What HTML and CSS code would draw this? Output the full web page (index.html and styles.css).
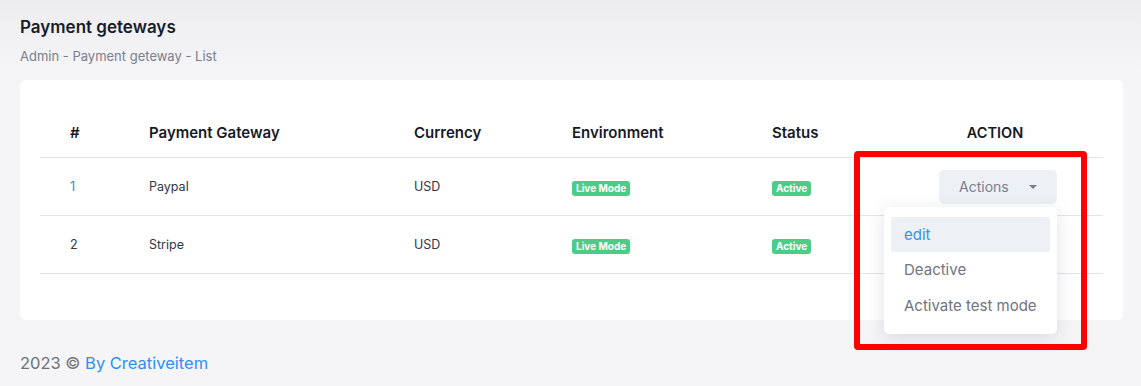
FILE: index.html
```html
<!DOCTYPE html>
<html lang="en">
<head>
    <meta charset="UTF-8">
    <meta name="viewport" content="width=device-width, initial-scale=1.0">
    <title>Payment geteways</title>
    <link rel="stylesheet" href="styles.css">
</head>
<body>
    <div class="page">
        <div class="page-head">
            <h1>Payment geteways</h1>
            <p class="crumbs">Admin - Payment geteway - List</p>
        </div>

        <div class="card">
            <table class="gateways">
                <colgroup>
                    <col class="c-num">
                    <col class="c-name">
                    <col class="c-cur">
                    <col class="c-env">
                    <col class="c-status">
                    <col class="c-action">
                </colgroup>
                <thead>
                    <tr>
                        <th>#</th>
                        <th>Payment Gateway</th>
                        <th>Currency</th>
                        <th>Environment</th>
                        <th>Status</th>
                        <th class="center">ACTION</th>
                    </tr>
                </thead>
                <tbody>
                    <tr>
                        <td class="num link">1</td>
                        <td>Paypal</td>
                        <td>USD</td>
                        <td><span class="badge">Live Mode</span></td>
                        <td><span class="badge">Active</span></td>
                        <td class="center">
                            <div class="dropdown">
                                <button class="btn-actions">Actions <span class="caret"></span></button>
                                <ul class="menu">
                                    <li class="selected">edit</li>
                                    <li>Deactive</li>
                                    <li>Activate test mode</li>
                                </ul>
                            </div>
                        </td>
                    </tr>
                    <tr>
                        <td class="num">2</td>
                        <td>Stripe</td>
                        <td>USD</td>
                        <td><span class="badge">Live Mode</span></td>
                        <td><span class="badge">Active</span></td>
                        <td class="center"></td>
                    </tr>
                </tbody>
            </table>
        </div>

        <footer class="foot">2023 &copy; <a href="#">By Creativeitem</a></footer>
    </div>

    <div class="highlight"></div>
</body>
</html>
```

FILE: styles.css
```css
body {
    font-family: Inter, "Open Sans", Arial, sans-serif;
    margin: 0;
    padding: 0;
    background: linear-gradient(#ededf0, #f5f5f8 70px);
    min-height: 386px;
    color: #1e2230;
}

.page {
    padding: 0 18px 0 20px;
}

.page-head {
    padding-top: 17px;
    height: 80px;
    box-sizing: border-box;
}

.page-head h1 {
    margin: 0;
    font-size: 17px;
    font-weight: 600;
    line-height: 20px;
    color: #181c2a;
}

.crumbs {
    margin: 11px 0 0;
    font-size: 13px;
    line-height: 16px;
    color: #7a7d8c;
}

.card {
    background: white;
    border-radius: 6px;
    padding: 20px 20px 46px;
}

.gateways {
    width: 100%;
    border-collapse: collapse;
    table-layout: fixed;
}

.c-num { width: 79px; }
.c-name { width: 265px; }
.c-cur { width: 158px; }
.c-env { width: 200px; }
.c-status { width: 145px; }
.c-action { width: 216px; }

.gateways th {
    text-align: left;
    font-size: 15px;
    font-weight: 600;
    line-height: 20px;
    padding: 23px 0 14px 30px;
    color: #161a28;
    border-bottom: 1px solid #e4e4e8;
}

.gateways th.center {
    font-size: 14.5px;
}

.gateways td {
    font-size: 12.5px;
    line-height: 20px;
    height: 58px;
    padding: 0 0 0 30px;
    box-sizing: border-box;
    color: #333646;
    border-bottom: 1px solid #e4e4e8;
}

.gateways th.center,
.gateways td.center {
    text-align: center;
    padding-left: 0;
}

.gateways td.link {
    color: #1d8fe0;
}

.badge {
    display: inline-block;
    background: #4ccd87;
    color: white;
    font-size: 10px;
    font-weight: 700;
    line-height: 15px;
    padding: 0 4px;
    border-radius: 3px;
    vertical-align: middle;
    margin-top: 3px;
}

.dropdown {
    position: relative;
    display: inline-block;
    margin-left: 6px;
}

.btn-actions {
    font-family: inherit;
    font-size: 14px;
    color: #7b7f8c;
    background: #edf0f4;
    border: none;
    border-radius: 5px;
    height: 34px;
    width: 118px;
    padding: 0 0 0 20px;
    text-align: left;
    display: flex;
    align-items: center;
}

.caret {
    margin-left: 20px;
    width: 0;
    height: 0;
    border-left: 4px solid transparent;
    border-right: 4px solid transparent;
    border-top: 4px solid #7b7f8c;
}

.menu {
    position: absolute;
    top: 37px;
    right: 0;
    width: 173px;
    margin: 0;
    padding: 10px 7px;
    box-sizing: border-box;
    list-style: none;
    background: white;
    border-radius: 5px;
    box-shadow: 0 4px 18px rgba(30, 35, 60, 0.13);
    text-align: left;
    z-index: 5;
}

.menu li {
    font-size: 15px;
    line-height: 36px;
    height: 36px;
    padding-left: 13px;
    color: #6f7382;
    border-radius: 3px;
    white-space: nowrap;
}

.menu li.selected {
    background: #edf0f4;
    color: #3591ef;
    height: 35px;
    line-height: 35px;
}

.foot {
    padding-top: 32px;
    font-size: 16.5px;
    line-height: 22px;
    color: #707070;
}

.foot a {
    color: #2e90f2;
    text-decoration: none;
}

.highlight {
    position: absolute;
    left: 854px;
    top: 151px;
    width: 233px;
    height: 199px;
    box-sizing: border-box;
    border: 6px solid #ff0000;
    border-radius: 4px;
    z-index: 10;
}
```
